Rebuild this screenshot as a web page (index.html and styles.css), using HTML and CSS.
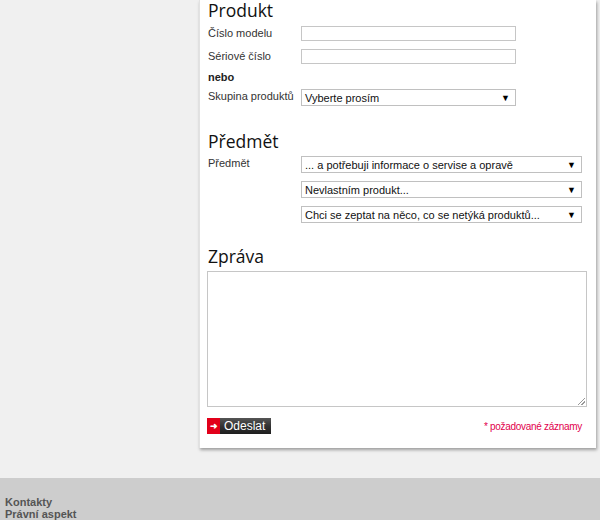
FILE: index.html
```html
<!DOCTYPE html>
<html lang="cs">
<head>
<meta charset="utf-8">
<title>Kontaktní formulář</title>
<link rel="stylesheet" href="styles.css">
</head>
<body>
<div class="page">
  <div class="card">
    <h2 class="heading">Produkt</h2>
    <div class="row row-input row-first">
      <label class="label">Číslo modelu</label>
      <div class="input short"></div>
    </div>
    <div class="row row-input">
      <label class="label">Sériové číslo</label>
      <div class="input short"></div>
    </div>
    <div class="row row-nebo">
      <span class="label bold">nebo</span>
    </div>
    <div class="row row-select">
      <label class="label">Skupina produktů</label>
      <div class="select short"><span class="sel-text">Vyberte prosím</span><span class="arrow">▼</span></div>
    </div>

    <h2 class="heading heading-2">Předmět</h2>
    <div class="row row-subject">
      <label class="label">Předmět</label>
      <div class="subject-list">
        <div class="select long"><span class="sel-text">... a potřebuji informace o servise a opravě</span><span class="arrow">▼</span></div>
        <div class="select long"><span class="sel-text">Nevlastním produkt...</span><span class="arrow">▼</span></div>
        <div class="select long"><span class="sel-text">Chci se zeptat na něco, co se netýká produktů...</span><span class="arrow">▼</span></div>
      </div>
    </div>

    <h2 class="heading heading-3">Zpráva</h2>
    <div class="textarea"><span class="grip"></span></div>

    <div class="actions">
      <button class="submit" type="button"><span class="submit-icon">➜</span><span class="submit-text">Odeslat</span></button>
      <span class="required">* požadované záznamy</span>
    </div>
  </div>
</div>
<footer class="footer">
  <a class="foot-link">Kontakty</a>
  <a class="foot-link">Právní aspekt</a>
</footer>
</body>
</html>
```
FILE: styles.css
```css
html, body {
  margin: 0;
  padding: 0;
  background: #f0f0f0;
  font-family: "Liberation Sans", Arial, sans-serif;
  font-size: 11px;
  color: #333;
}
.page {
  height: 478px;
  padding-left: 199px;
  box-sizing: border-box;
}
.card {
  width: 397px;
  height: 448px;
  box-sizing: border-box;
  background: #fff;
  border-left: 1px solid #e2e2e2;
  box-shadow: 1px 2px 3px rgba(0,0,0,0.35);
  padding: 0 14px 0 7px;
  display: flex;
  flex-direction: column;
}
.heading {
  margin: 0;
  padding-left: 1px;
  font-family: "Open Sans", sans-serif;
  font-weight: normal;
  font-size: 17.5px;
  line-height: 20px;
  color: #111;
  height: 20px;
}
.heading-2 { margin-top: 25px; }
.heading-3 { margin-top: 23px; }
.row {
  display: flex;
  align-items: flex-start;
}
.label {
  width: 94px;
  padding-left: 1px;
  box-sizing: border-box;
  flex: none;
  color: #333;
  line-height: 14px;
}
.bold { font-weight: bold; color: #222; }
.row-input { margin-top: 4px; height: 19px; }
.row-first { margin-top: 6px; }
.row-nebo { margin-top: 2px; height: 14px; }
.row-select { margin-top: 5px; }
.input {
  height: 15px;
  border: 1px solid #c6c6c6;
  box-sizing: border-box;
  background: #fff;
}
.short { width: 215px; }
.long { width: 281px; }
.select {
  height: 17px;
  box-sizing: border-box;
  border: 1px solid #c0c0c0;
  background: #fff;
  display: flex;
  align-items: center;
  padding: 0 5px 0 3px;
  color: #111;
}
.sel-text { flex: 1; line-height: 14px; white-space: nowrap; }
.arrow { font-size: 9px; color: #000; }
.row-subject { margin-top: 5px; }
.subject-list {
  display: flex;
  flex-direction: column;
  gap: 8px;
}
.textarea {
  margin-top: 5px;
  width: 380px;
  height: 136px;
  box-sizing: border-box;
  border: 1px solid #c6c6c6;
  position: relative;
  background: #fff;
}
.grip {
  position: absolute;
  right: 1px;
  bottom: 1px;
  width: 7px;
  height: 7px;
  background: linear-gradient(135deg, transparent 45%, #999 45%, #999 55%, transparent 55%, transparent 70%, #999 70%, #999 80%, transparent 80%);
}
.actions {
  margin-top: 11px;
  display: flex;
  align-items: center;
  justify-content: space-between;
  width: 375px;
}
.submit {
  display: flex;
  padding: 0;
  border: 0;
  height: 16px;
  width: 64px;
  font-family: inherit;
  cursor: pointer;
  background: none;
}
.submit-icon {
  width: 13px;
  height: 16px;
  background: #e2001a;
  color: #fff;
  font-size: 9px;
  font-weight: bold;
  line-height: 16px;
  text-align: center;
}
.submit-text {
  flex: 1;
  height: 16px;
  background: linear-gradient(#555, #333 50%, #1e1e1e);
  color: #fff;
  font-size: 12px;
  line-height: 16px;
  text-align: left;
  padding-left: 4px;
}
.required {
  color: #e2004d;
  font-size: 10px;
  letter-spacing: -0.3px;
}
.footer {
  height: 42px;
  background: #cdcdcd;
  padding: 18px 0 0 5px;
  box-sizing: border-box;
  display: flex;
  flex-direction: column;
}
.foot-link {
  font-weight: bold;
  color: #555;
  font-size: 11px;
  line-height: 12px;
  text-decoration: none;
}
```
